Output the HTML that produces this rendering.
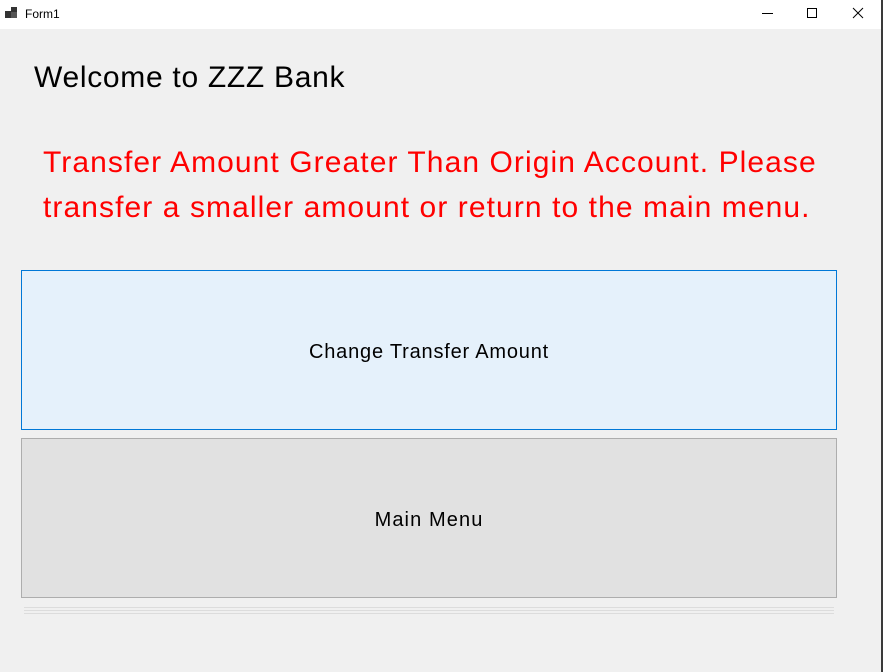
<!DOCTYPE html>
<html><head><meta charset="utf-8"><style>
html,body{margin:0;padding:0;}
body{width:883px;height:672px;position:relative;background:#f0f0f0;font-family:"Liberation Sans","DejaVu Sans",sans-serif;overflow:hidden;}
.tb{position:absolute;left:0;top:0;width:881px;height:29px;background:#fff;}
.edge{position:absolute;left:881px;top:0;width:2px;height:672px;background:#3a3a3a;}
.t{position:absolute;white-space:nowrap;}
.btn{position:absolute;left:21px;width:814px;height:158px;display:flex;align-items:center;justify-content:center;font-size:20px;color:#000;padding-top:4px;box-sizing:content-box;height:154px;}
.line{position:absolute;left:24px;width:810px;height:1px;background:#dcdcdc;}
</style></head><body>
<div class="tb"></div>
<div class="edge"></div>
<svg style="position:absolute;left:5px;top:7px" width="14" height="12"><rect x="0" y="4" width="7" height="7" fill="#333"/><rect x="6" y="0" width="6" height="6" fill="#333"/><rect x="6" y="5" width="6" height="6" fill="#555"/></svg>
<div class="t" style="left:25px;top:7px;font-size:12px;color:#000">Form1</div>
<svg style="position:absolute;left:750px;top:0" width="131" height="29" fill="none" stroke="#000" stroke-width="1">
<line x1="12" y1="13.5" x2="23" y2="13.5"/>
<rect x="57.5" y="8.5" width="9" height="9"/>
<line x1="103" y1="8" x2="113" y2="18"/><line x1="113" y1="8" x2="103" y2="18"/>
</svg>
<div class="t" style="left:34px;top:61px;font-size:30px;color:#000;letter-spacing:0.7px">Welcome to ZZZ Bank</div>
<div class="t" style="left:43px;top:140px;font-size:30px;line-height:45px;color:#ff0000;letter-spacing:1.08px">Transfer Amount Greater Than Origin Account. Please<br>transfer a smaller amount or return to the main menu.</div>
<div class="btn" style="top:270px;background:#e5f1fb;border:1px solid #0078d7;letter-spacing:0.8px">Change Transfer Amount</div>
<div class="btn" style="top:438px;background:#e1e1e1;border:1px solid #adadad;letter-spacing:1.1px">Main Menu</div>
<div class="line" style="top:607px"></div>
<div class="line" style="top:610px"></div>
<div class="line" style="top:613px"></div>
</body></html>
